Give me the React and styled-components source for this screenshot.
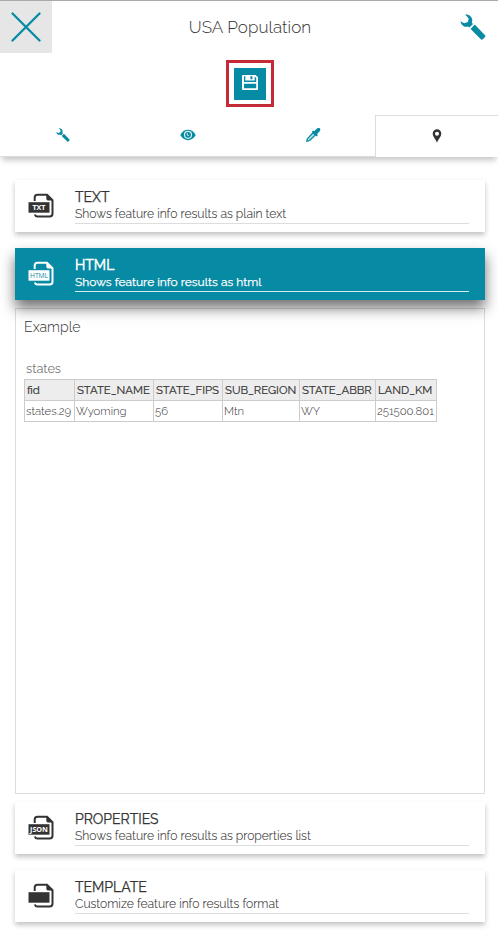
import React from "react";
import styled, { createGlobalStyle, css } from "styled-components";

const teal = "#078aa3";
const ink = "#333333";

const GlobalStyle = createGlobalStyle`
  * { box-sizing: border-box; }
  body {
    margin: 0;
    background: #fff;
    color: ${ink};
    font-family: Raleway, Lato, "Open Sans", sans-serif;
    overflow: hidden;
  }
`;

const Page = styled.div`
  width: 498px;
  height: 937px;
  overflow: hidden;
  background: #fff;
  box-shadow: inset 0 1px 0 #aaa;
`;

const Header = styled.header`
  display: grid;
  grid-template-columns: 52px 1fr 52px;
  height: 53px;
  padding-top: 1px;
`;

const CloseButton = styled.button`
  display: flex;
  align-items: center;
  justify-content: center;
  padding: 0;
  border: 0;
  background: #e6e6e6;
`;

const HeaderIcon = styled.div`
  display: flex;
  align-items: center;
  justify-content: center;
  padding-left: 2px;
`;

const Title = styled.h1`
  margin: 0;
  padding-left: 2px;
  text-align: center;
  font-weight: 300;
  font-size: 17px;
  line-height: 52px;
  letter-spacing: 0.08px;
`;

const Toolbar = styled.div`
  display: flex;
  justify-content: center;
  height: 62px;
  padding: 7px 0 0 2px;
`;

const SaveFrame = styled.div`
  display: flex;
  align-items: center;
  justify-content: center;
  width: 48px;
  height: 47px;
  border: 3px solid #c52b36;
`;

const SaveButton = styled.button`
  display: flex;
  align-items: center;
  justify-content: center;
  width: 32px;
  height: 32px;
  padding: 0 0 2px;
  border: 0;
  background: ${teal};
`;

const Tabs = styled.nav`
  display: grid;
  grid-template-columns: repeat(3, 125px) 1fr;
  height: 42px;
  box-shadow: 0 5px 6px -2px rgba(0, 0, 0, 0.24);
`;

const Tab = styled.div`
  display: flex;
  align-items: center;
  justify-content: center;
  padding-bottom: 1px;
  background: #fff;
  ${(p) =>
    p.$active
      ? css`
          border: 1px solid #ddd;
          border-width: 1px 0 0 1px;
        `
      : css`
          border-bottom: 1px solid #ddd;
        `}
`;

const Body = styled.main`
  display: flex;
  flex-direction: column;
  padding: 23px 13px 0 15px;
`;

const Card = styled.section`
  display: grid;
  grid-template-columns: 60px 1fr;
  height: 52px;
  padding-right: 16px;
  margin-bottom: ${(p) => p.$gap ?? 16}px;
  background: ${(p) => (p.$selected ? teal : "#fff")};
  color: ${(p) => (p.$selected ? "#fff" : ink)};
  position: relative;
  z-index: ${(p) => (p.$selected ? 1 : 0)};
  box-shadow: ${(p) =>
    p.$selected ? "0 8px 13px rgba(0, 0, 0, 0.56)" : "0 3px 5px rgba(0, 0, 0, 0.24)"};
`;

const CardIcon = styled.div`
  padding: 13px 0 0 13px;
  line-height: 0;
`;

const CardText = styled.div`
  height: 44px;
  padding-top: 9px;
  border-bottom: 1px solid ${(p) => (p.$selected ? "#d5eef2" : "#ddd")};
  white-space: nowrap;
`;

const CardTitle = styled.div`
  font-size: 14px;
  line-height: 17px;
  -webkit-text-stroke: ${(p) => (p.$selected ? "0.5px" : "0.25px")} currentColor;
`;

const CardDescription = styled.div`
  font-size: ${(p) => (p.$selected ? "12px" : "12.15px")};
  line-height: 16px;
  font-weight: ${(p) => (p.$selected ? 400 : 300)};
  -webkit-text-stroke: ${(p) => (p.$selected ? "0.25px" : "0.1px")} currentColor;
`;

const Example = styled.section`
  height: 486px;
  margin-bottom: 8px;
  padding: 8px;
  border: 1px solid #ddd;
`;

const ExampleTitle = styled.div`
  font-size: 14.1px;
  line-height: 20px;
  font-weight: 300;
`;

const Table = styled.table`
  width: 413px;
  margin-top: 24px;
  border-collapse: collapse;
  table-layout: fixed;
  font-size: 11.35px;
`;

const Caption = styled.caption`
  height: 18px;
  padding-left: 2px;
  text-align: left;
  font-size: 12.7px;
  line-height: 16px;
  color: #777;
`;

const HeadCell = styled.th`
  height: 21px;
  padding: 0 0 0 2px;
  border: 1px solid #ccc;
  background: #ededed;
  text-align: left;
  font-weight: 400;
  line-height: 14px;
  white-space: nowrap;
  -webkit-text-stroke: 0.2px currentColor;
`;

const Cell = styled.td`
  height: 21px;
  padding: 0 0 0 1px;
  border: 1px solid #ccc;
  font-weight: 300;
  line-height: 14px;
  white-space: nowrap;
`;

const FileLabel = styled.text`
  font: ${(p) => p.$weight} 7px "Open Sans", sans-serif;
  text-anchor: middle;
`;

function CloseIcon() {
  return (
    <svg width="30" height="30" viewBox="0 0 30 30" fill="none" stroke={teal} strokeWidth="2.3" strokeLinecap="round">
      <path d="M1.500 1.500 28.500 28.500M28.500 1.500 1.500 28.500" />
    </svg>
  );
}

function WrenchIcon({ size }) {
  return (
    <svg width={size} height={size} viewBox="0 0 26 26" fill={teal}>
      <path d="M5.200.6C8.500 0 11.700 2.300 12.200 5.500c.2 1.200 0 2.300-.4 3.300l1.200 1.200-3.600 3.600-1.300-1.200C4.900 13.700 1 11.300.5 7.200l3.700 2 3.700-1.200.8-3.500L5.200.6Z" />
      <path d="m14.700 10.600 10.300 10.600c.6.600.6 1.200 0 1.800l-2.200 2.200c-.6.600-1.300.6-1.900 0L10.600 14.900Z" />
    </svg>
  );
}

function SaveIcon() {
  return (
    <svg width="16" height="15" viewBox="0 0 16 15">
      <path fill="#fff" d="M1 0h12.500L16 2.300V14a1 1 0 0 1-1 1H1a1 1 0 0 1-1-1V1a1 1 0 0 1 1-1Z" />
      <path fill={teal} d="M2 1.300h1.300v4.200h9.400V1.500l1.500 1.500v4H2ZM2 8.700h12.200v4.600H2ZM8.400 1.200h2v3h-2Z" />
    </svg>
  );
}

function EyeIcon() {
  return (
    <svg width="16" height="12" viewBox="0 0 16 12">
      <path fill={teal} d="M.3 6C2.100 2.700 4.700.8 8 .8S13.900 2.700 15.700 6C13.900 9.300 11.300 11.200 8 11.200S2.100 9.300.3 6Z" />
      <circle cx="8" cy="5.800" r="3.500" fill="none" stroke="#d8f0f4" strokeWidth="1.200" />
      <path d="M7.300 4.300v1.900l1.500.4" fill="none" stroke="#d8f0f4" strokeWidth="1" />
    </svg>
  );
}

function DropperIcon() {
  return (
    <svg width="16" height="16" viewBox="0 0 16 16">
      <path fill={teal} d="M9.300 4.200 11.300 2c1-1.100 2.600-1.500 3.500-.7.900.9.600 2.400-.5 3.400L12 6.900l1 1-1.500 1.500L6.900 4.800l1.400-1.400Z" />
      <path fill="#b9e0e7" stroke={teal} strokeWidth="1.300" strokeLinejoin="round" d="m8 5.800 2.300 2.300-5.800 5.400-2.800.9.800-2.800Z" />
    </svg>
  );
}

function PinIcon() {
  return (
    <svg width="10" height="14" viewBox="0 0 10 14">
      <path fill={ink} fillRule="evenodd" d="M5 .3a4.300 4.300 0 0 1 4.300 4.300C9.300 7.600 6.500 10 5 13.800 3.500 10 .7 7.600.7 4.600A4.300 4.300 0 0 1 5 .3ZM5 2.700a2 2 0 1 0 0 4 2 2 0 0 0 0-4Z" />
    </svg>
  );
}

function FileIcon({ label, labelWidth, selected }) {
  const main = selected ? "#fff" : ink;
  const back = selected ? teal : "#fff";
  return (
    <svg width="27" height="26" viewBox="0 0 27 26">
      <path
        d="M6.700 8V4.500A2.800 2.800 0 0 1 9.500 1.700H19l5.500 5.500v13.500a2.800 2.800 0 0 1-2.800 2.800H9.500a2.800 2.800 0 0 1-2.700-2"
        fill="none"
        stroke={main}
        strokeWidth="2"
      />
      <path d="M18.300 1.500v3.800c0 1.400.9 2.300 2.300 2.300h4Z" fill={main} />
      <path d="M.5 9.200h21v10.500H.5z" fill={main} />
      {label && (
        <FileLabel x="11" y="17" fill={back} $weight={selected ? 400 : 700} textLength={labelWidth} lengthAdjust="spacingAndGlyphs">
          {label}
        </FileLabel>
      )}
    </svg>
  );
}

const formats = {
  text: { title: "TEXT", description: "Shows feature info results as plain text", icon: "TXT", iconWidth: 13 },
  html: { title: "HTML", description: "Shows feature info results as html", icon: "HTML", iconWidth: 18 },
  properties: { title: "PROPERTIES", description: "Shows feature info results as properties list", icon: "JSON", iconWidth: 18 },
  template: { title: "TEMPLATE", description: "Customize feature info results format" },
};

const columns = [
  { name: "fid", value: "states.29", width: 50 },
  { name: "STATE_NAME", value: "Wyoming", width: 79 },
  { name: "STATE_FIPS", value: "56", width: 69 },
  { name: "SUB_REGION", value: "Mtn", width: 77 },
  { name: "STATE_ABBR", value: "WY", width: 76 },
  { name: "LAND_KM", value: "251500.801", width: 61 },
];

function FormatCard({ format, selected, gap }) {
  return (
    <Card $selected={selected} $gap={gap}>
      <CardIcon>
        <FileIcon label={format.icon} labelWidth={format.iconWidth} selected={selected} />
      </CardIcon>
      <CardText $selected={selected}>
        <CardTitle $selected={selected}>{format.title}</CardTitle>
        <CardDescription $selected={selected}>{format.description}</CardDescription>
      </CardText>
    </Card>
  );
}

export default function App() {
  return (
    <>
      <GlobalStyle />
      <Page>
        <Header>
          <CloseButton aria-label="Close"><CloseIcon /></CloseButton>
          <Title>USA Population</Title>
          <HeaderIcon><WrenchIcon size={26} /></HeaderIcon>
        </Header>
        <Toolbar>
          <SaveFrame>
            <SaveButton aria-label="Save"><SaveIcon /></SaveButton>
          </SaveFrame>
        </Toolbar>
        <Tabs>
          <Tab><WrenchIcon size={14} /></Tab>
          <Tab><EyeIcon /></Tab>
          <Tab><DropperIcon /></Tab>
          <Tab $active><PinIcon /></Tab>
        </Tabs>
        <Body>
          <FormatCard format={formats.text} />
          <FormatCard format={formats.html} selected gap={8} />
          <Example>
            <ExampleTitle>Example</ExampleTitle>
            <Table>
              <Caption>states</Caption>
              <colgroup>
                {columns.map((c) => <col key={c.name} width={c.width} />)}
              </colgroup>
              <thead>
                <tr>{columns.map((c) => <HeadCell key={c.name}>{c.name}</HeadCell>)}</tr>
              </thead>
              <tbody>
                <tr>{columns.map((c) => <Cell key={c.name}>{c.value}</Cell>)}</tr>
              </tbody>
            </Table>
          </Example>
          <FormatCard format={formats.properties} />
          <FormatCard format={formats.template} />
        </Body>
      </Page>
    </>
  );
}
